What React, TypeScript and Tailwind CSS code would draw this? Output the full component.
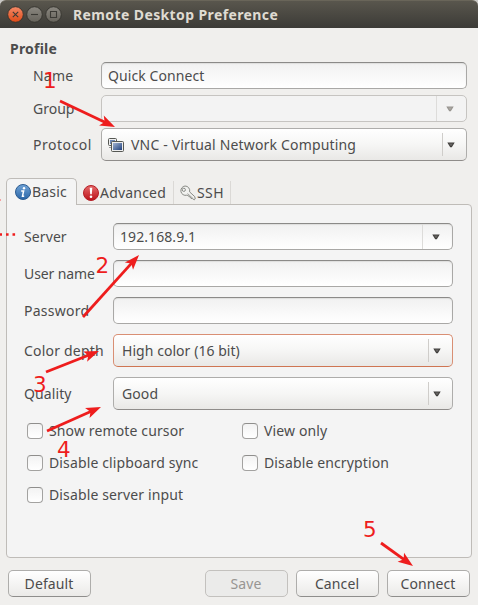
import * as React from 'react';
import clsx from 'clsx';

const DownArrow = ({ muted = false }: { muted?: boolean }) => (
  <svg width="8" height="6" viewBox="0 0 8 6">
    <path d="M0.3 0.4h7.4L4.8 5.3H3.2z" fill={muted ? '#97948f' : '#403f3c'} />
    <path d="M2 1.4h4L4 4.2z" fill={muted ? '#aaa7a2' : '#666462'} />
  </svg>
);

type EntryProps = { value?: string; disabled?: boolean; dropdown?: boolean };

const Entry = ({ value, disabled, dropdown }: EntryProps) => (
  <div
    className={clsx(
      'flex h-[27px] items-center rounded-[5px] border pl-[6px] tracking-[0.08px]',
      disabled
        ? 'border-[#c6c4c1] bg-[#f3f3f3]'
        : 'border-[#a9a8a6] border-t-[#8b8a88] bg-gradient-to-b from-[#f1f1f1] to-white shadow-[inset_0_1px_1px_#dededd]',
    )}
  >
    <span className="grow">{value}</span>
    {dropdown && (
      <span className="flex h-full w-[30px] items-center border-l border-[#dddcda] pl-[9px]">
        <DownArrow muted={disabled} />
      </span>
    )}
  </div>
);

type ComboProps = { children: React.ReactNode; focused?: boolean };

const Combo = ({ children, focused }: ComboProps) => (
  <div
    className={clsx(
      'flex h-[33px] items-center rounded-[5px] border bg-gradient-to-b from-white via-[#f6f6f5] to-[#e9e8e6] pl-2',
      focused ? 'border-[#d98f74] border-b-[#cf7552]' : 'border-[#aeadab] border-b-[#8f8c8a]',
    )}
  >
    {children}
    <span className="ml-auto flex h-[23px] w-6 items-center border-l border-[#cfcdca] pl-[4px]">
      <DownArrow />
    </span>
  </div>
);

const Check = ({ label }: { label: string }) => (
  <div className="flex h-4 items-center gap-[6px] tracking-[0.13px]">
    <span className="size-4 rounded-[4px] border border-[#a3a2a0] border-t-[#8f8e8c] bg-gradient-to-b from-[#f3f3f3] to-white" />
    <span>{label}</span>
  </div>
);

const Button = ({ label, disabled }: { label: string; disabled?: boolean }) => (
  <button
    className={clsx(
      'h-[27px] w-[83px] rounded-[5px] border pr-[1px] tracking-[0.1px]',
      disabled
        ? 'border-[#c3c1be] bg-[#ebebea] text-[#979592]'
        : 'border-[#aeadab] border-b-[#8f8e8c] bg-gradient-to-b from-white to-[#ebeae8]',
    )}
  >
    {label}
  </button>
);

const WindowButton = ({ close, children }: { close?: boolean; children: React.ReactNode }) => (
  <svg width="17" height="17" viewBox="0 0 17 17">
    <defs>
      <linearGradient id={close ? 'wclose' : 'wgrey'} x1="0" y1="0" x2="0" y2="1">
        <stop offset="0" stopColor={close ? '#f48a68' : '#8b8881'} />
        <stop offset="1" stopColor={close ? '#df4a16' : '#66635b'} />
      </linearGradient>
    </defs>
    <circle cx="8.5" cy="8.5" r="7.8" fill={close ? 'url(#wclose)' : 'url(#wgrey)'} stroke="#34332e" strokeWidth="0.9" />
    <g fill="none" stroke="#3b3a35" strokeWidth="1.1">{children}</g>
  </svg>
);

const TitleBar = () => (
  <div className="h-7 bg-[#c9c8c5]">
    <div className="flex h-7 items-center rounded-t-[6px] border-t border-[#696559] bg-gradient-to-b from-[#59564d] to-[#3c3b37] pl-[7px]">
      <div className="flex gap-[2px]">
        <WindowButton close><path d="M5.8 5.8l5.4 5.4M11.2 5.8l-5.4 5.4" /></WindowButton>
        <WindowButton><path d="M5 8.5h7" /></WindowButton>
        <WindowButton><path d="M5.5 5.5h6v6h-6z" /></WindowButton>
      </div>
      <span className="ml-[11px] text-[14px] font-bold tracking-[0.39px] text-[#dfdbd2]">Remote Desktop Preference</span>
    </div>
  </div>
);

const VncIcon = () => (
  <svg width="17" height="16" viewBox="0 0 17 16" className="mr-[7px] -ml-[3px]">
    <defs>
      <linearGradient id="screen" x1="0" y1="0" x2="1" y2="1">
        <stop offset="0" stopColor="#a3b5d4" />
        <stop offset="1" stopColor="#1e3f7c" />
      </linearGradient>
    </defs>
    <rect x="1.5" y="1.5" width="8" height="7" rx="1" fill="#eee" stroke="#555753" />
    <rect x="3" y="3" width="5" height="4" fill="#6d87b5" />
    <path d="M2 10.5h3" stroke="#999" />
    <rect x="4.5" y="4.5" width="12" height="10" rx="1" fill="#eee" stroke="#555753" />
    <rect x="6" y="6" width="9" height="7" fill="url(#screen)" />
  </svg>
);

const InfoIcon = () => (
  <svg width="16" height="16" viewBox="0 0 16 16">
    <defs>
      <linearGradient id="info" x1="0" y1="0" x2="0" y2="1">
        <stop offset="0" stopColor="#71a4d7" />
        <stop offset="1" stopColor="#2a65a7" />
      </linearGradient>
    </defs>
    <circle cx="8" cy="8" r="7.5" fill="url(#info)" stroke="#2d5c91" />
    <circle cx="9" cy="4.2" r="1.2" fill="#fff" />
    <path d="M6.2 7h2.4L7.5 12.2h1.7" fill="none" stroke="#fff" strokeWidth="1.5" />
  </svg>
);

const ErrorIcon = () => (
  <svg width="16" height="16" viewBox="0 0 16 16">
    <defs>
      <linearGradient id="error" x1="0" y1="0" x2="0" y2="1">
        <stop offset="0" stopColor="#e66a6a" />
        <stop offset="1" stopColor="#bb1118" />
      </linearGradient>
    </defs>
    <circle cx="8" cy="8" r="7.5" fill="url(#error)" stroke="#b51f26" />
    <path d="M6.7 2.8h2.6L8.8 9.3H7.2z" fill="#fff" />
    <circle cx="8" cy="11.8" r="1.3" fill="#fff" />
  </svg>
);

const KeyIcon = () => (
  <svg width="17" height="16" viewBox="0 0 17 16">
    <path
      d="M6 1a4.7 4.7 0 1 0 1.8 9.2l1.4.2.7 1.3 1.6.2.5 1.5 1.5.2 1.7 1.2 1-.8-.4-2.3-5.200-4.800A4.700 4.700 0 0 0 6 1z"
      fill="#f1f1ef"
      stroke="#888a85"
    />
    <circle cx="4.8" cy="4.8" r="1.6" fill="#f5f5f4" stroke="#888a85" />
    <path d="M8.5 8.5l5.5 5" stroke="#a3a39f" />
  </svg>
);

// numbered walkthrough arrows that lie over the dialog
const arrows = [
  [60, 101, 115, 127],
  [83, 317, 139, 255],
  [46, 372, 99, 351],
  [47, 431, 101, 407],
  [381, 543, 413, 566],
];

const digits = [
  { n: '1', x: 43, y: 88 },
  { n: '2', x: 95.5, y: 273 },
  { n: '3', x: 33, y: 392 },
  { n: '4', x: 57, y: 457 },
  { n: '5', x: 363, y: 537 },
];

const Annotations = () => (
  <svg className="pointer-events-none absolute inset-0" width="478" height="605" viewBox="0 0 478 605">
    {arrows.map(([x1, y1, x2, y2]) => {
      const length = Math.hypot(x2 - x1, y2 - y1);
      const angle = (Math.atan2(y2 - y1, x2 - x1) * 180) / Math.PI;
      return (
        <g key={y1} transform={`translate(${x2} ${y2}) rotate(${angle})`} fill="#ee1d1d">
          <path d={`M${-length} 0H-10`} stroke="#ee1d1d" strokeWidth="2.8" />
          <path d="M0 0L-15 5.5L-11.5 0L-15 -5.5Z" />
        </g>
      );
    })}
    {digits.map(({ n, x, y }) => (
      <text key={n} x={x} y={y} fontSize="21.5" fontFamily="DejaVu Sans, sans-serif" fill="#ee1d1d">{n}</text>
    ))}
    <path d="M0 233.200h2v2.600H0zM6 233.200h2.600v2.600H6zM12.500 233.200h2.600v2.600h-2.600z" fill="#ee1d1d" />
    <path d="M0 199h1v2H0z" fill="#f7a0a0" />
  </svg>
);

const App: React.FC = () => {
  return (
    <div className="relative h-[605px] w-[478px] overflow-hidden bg-[#f0efed] font-['Noto_Sans',sans-serif] text-[14px] leading-4 whitespace-pre text-[#4c4c4c]">
      <TitleBar />

      <div className="pt-[13px] pl-[10px]">
        <h2 className="font-bold tracking-[0.2px]">Profile</h2>
      </div>

      <div className="mt-[5px] grid grid-cols-[68px_366px] items-center gap-y-[6px] pl-[33px]">
        <span className="tracking-[0.2px]">Name</span>
        <Entry value="Quick Connect" />
        <span>Group</span>
        <Entry disabled dropdown />
        <span className="tracking-[0.5px]">Protocol</span>
        <Combo>
          <VncIcon />
          <span className="tracking-[0.17px]">VNC - Virtual Network Computing</span>
        </Combo>
      </div>

      <div className="mt-[17px] ml-[6px] flex h-[26px]">
        <div className="relative z-10 flex h-[27px] w-[71px] items-center rounded-t-[5px] border border-b-0 border-[#bfbcb8] bg-[#f4f4f4] pl-2">
          <InfoIcon />
          <span className="ml-[1px] tracking-[0.2px]">Basic</span>
        </div>
        <div className="mt-[3px] flex h-[23px] w-[97px] items-center border-r border-[#dbd9d6] pl-[6px]">
          <ErrorIcon />
          <span className="ml-[1px] tracking-[0.2px]">Advanced</span>
        </div>
        <div className="mt-[3px] flex h-[23px] w-[57px] items-center border-r border-[#dbd9d6] pl-[5px]">
          <KeyIcon />
          <span className="ml-[1px] tracking-[0.4px]">SSH</span>
        </div>
      </div>

      <div className="ml-[6px] h-[354px] w-[466px] rounded-[4px] rounded-tl-none border border-[#bfbcb8] bg-[#f4f4f4] pt-[18px] pl-[17px]">
        <div className="grid grid-cols-[89px_340px] items-center gap-y-[10px]">
          <span className="tracking-[0.1px]">Server</span>
          <Entry value="192.168.9.1" dropdown />
          <span className="tracking-[-0.1px]">User name</span>
          <Entry />
          <span className="tracking-[0.25px]">Password</span>
          <Entry />
          <span className="tracking-[0.2px]">Color depth</span>
          <Combo focused><span className="tracking-[0.05px]">High color (16 bit)</span></Combo>
          <span className="tracking-[0.1px]">Quality</span>
          <Combo><span className="tracking-[0.1px]">Good</span></Combo>
        </div>

        <div className="mt-[13px] ml-[3px] grid grid-cols-[215px_auto] gap-y-4">
          <Check label="Show remote cursor" />
          <Check label="View only" />
          <Check label="Disable clipboard sync" />
          <Check label="Disable encryption" />
          <Check label="Disable server input" />
        </div>
      </div>

      <div className="mt-3 flex gap-2 px-2">
        <Button label="Default" />
        <div className="grow" />
        <Button label="Save" disabled />
        <Button label="Cancel" />
        <Button label="Connect" />
      </div>

      <Annotations />
    </div>
  );
};

export default App;
